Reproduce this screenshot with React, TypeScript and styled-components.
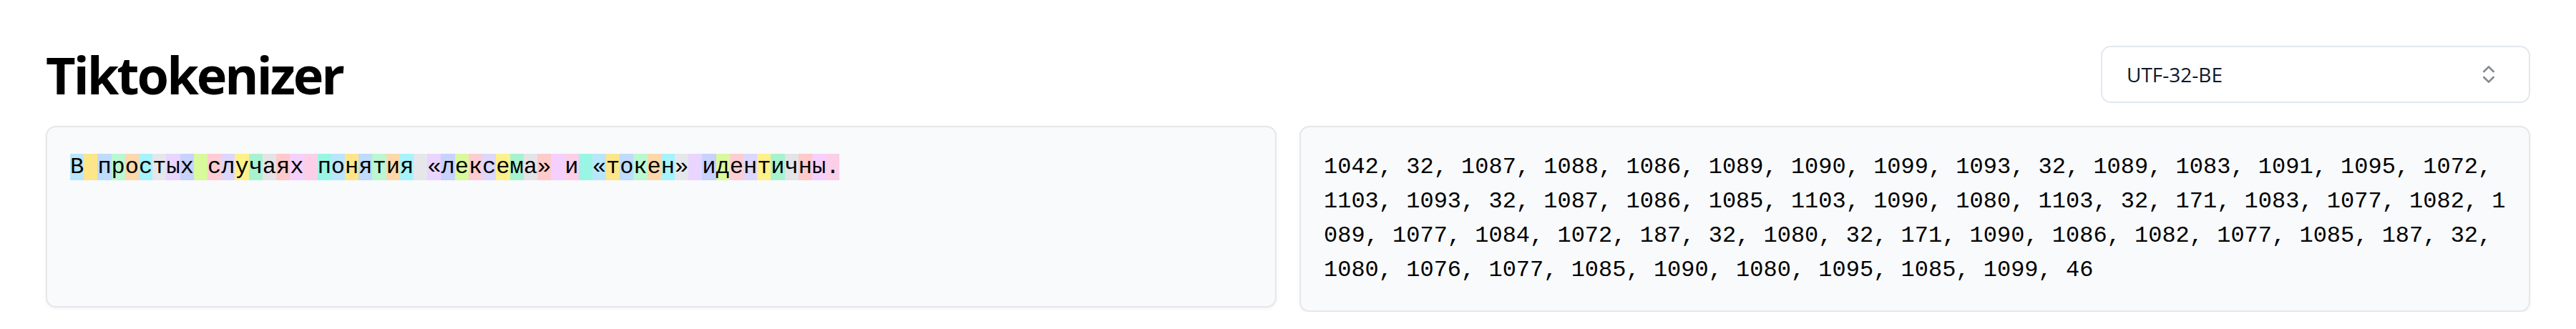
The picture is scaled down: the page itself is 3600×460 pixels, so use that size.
import React from "react";
import styled, { createGlobalStyle } from "styled-components";

const GlobalStyle = createGlobalStyle`
  html, body { margin: 0; padding: 0; background: #ffffff; }
  body { font-family: "Open Sans", "Noto Sans", sans-serif; color: #000; }
  * { box-sizing: border-box; }
`;

const Page = styled.main`
  display: flex;
  flex-direction: column;
  gap: 32px;
  padding: 64px 64px 0 64px;
`;

const Header = styled.header`
  display: flex;
  align-items: center;
  justify-content: space-between;
  height: 80px;
`;

const Title = styled.h1`
  margin: 0;
  font-family: "Open Sans", "Noto Sans", sans-serif;
  font-weight: 700;
  font-size: 72px;
  line-height: 80px;
  letter-spacing: -3px;
  color: #000;
`;

const SelectBox = styled.button`
  width: 600px;
  height: 80px;
  display: flex;
  align-items: center;
  justify-content: space-between;
  padding: 0 40px 0 34px;
  border: 2px solid #e2e8f0;
  border-radius: 14px;
  background: #ffffff;
  font-family: "Open Sans", "Noto Sans", sans-serif;
  font-size: 28px;
  color: #0f172a;
  cursor: pointer;
`;

const Grid = styled.section`
  display: grid;
  grid-template-columns: 1fr 1fr;
  gap: 32px;
  align-items: start;
`;

const Card = styled.div<{ $height?: number }>`
  min-height: ${(p) => (p.$height ? `${p.$height}px` : "auto")};
  padding: 32px;
  border: 2px solid #e5e7eb;
  border-radius: 14px;
  background: #f8fafc;
  box-shadow: 0 2px 4px rgba(0, 0, 0, 0.05);
  font-family: "Liberation Mono", "Courier New", monospace;
  font-size: 32px;
  line-height: 48px;
  color: #000;
  white-space: pre-wrap;
  word-break: break-all;
`;

const Token = styled.span<{ $bg: string }>`
  background: ${(p) => p.$bg};
`;

const COLORS = [
  "#bae6fd", // sky
  "#fde68a", // amber
  "#bfdbfe", // blue
  "#bbf7d0", // green
  "#fed7aa", // orange
  "#a5f3fc", // cyan
  "#e5e7eb", // gray
  "#e9d5ff", // purple
  "#c7d2fe", // indigo
  "#d9f99d", // lime
  "#fecdd3", // rose
  "#ddd6fe", // violet
  "#fef08a", // yellow
  "#a7f3d0", // emerald
  "#e4e4e7", // zinc
  "#fecaca", // red
  "#f5d0fe", // fuchsia
  "#fbcfe8", // pink
  "#99f6e4", // teal
];

const TEXT = "В простых случаях понятия «лексема» и «токен» идентичны.";

const ChevronsUpDown = () => (
  <svg
    width="32"
    height="32"
    viewBox="0 0 24 24"
    fill="none"
    stroke="#0f172a"
    strokeWidth="2"
    strokeLinecap="round"
    strokeLinejoin="round"
    style={{ opacity: 0.5, flexShrink: 0 }}
  >
    <path d="m7 15 5 5 5-5" />
    <path d="m7 9 5-5 5 5" />
  </svg>
);

export default function App() {
  const chars = Array.from(TEXT);
  const ids = chars.map((c) => c.codePointAt(0) as number);
  return (
    <>
      <GlobalStyle />
      <Page>
        <Header>
          <Title>Tiktokenizer</Title>
          <SelectBox>
            <span>UTF-32-BE</span>
            <ChevronsUpDown />
          </SelectBox>
        </Header>
        <Grid>
          <Card $height={254}>
            {chars.map((c, i) => (
              <Token key={i} $bg={COLORS[i % COLORS.length]}>
                {c}
              </Token>
            ))}
          </Card>
          <Card>{ids.join(", ")}</Card>
        </Grid>
      </Page>
    </>
  );
}
